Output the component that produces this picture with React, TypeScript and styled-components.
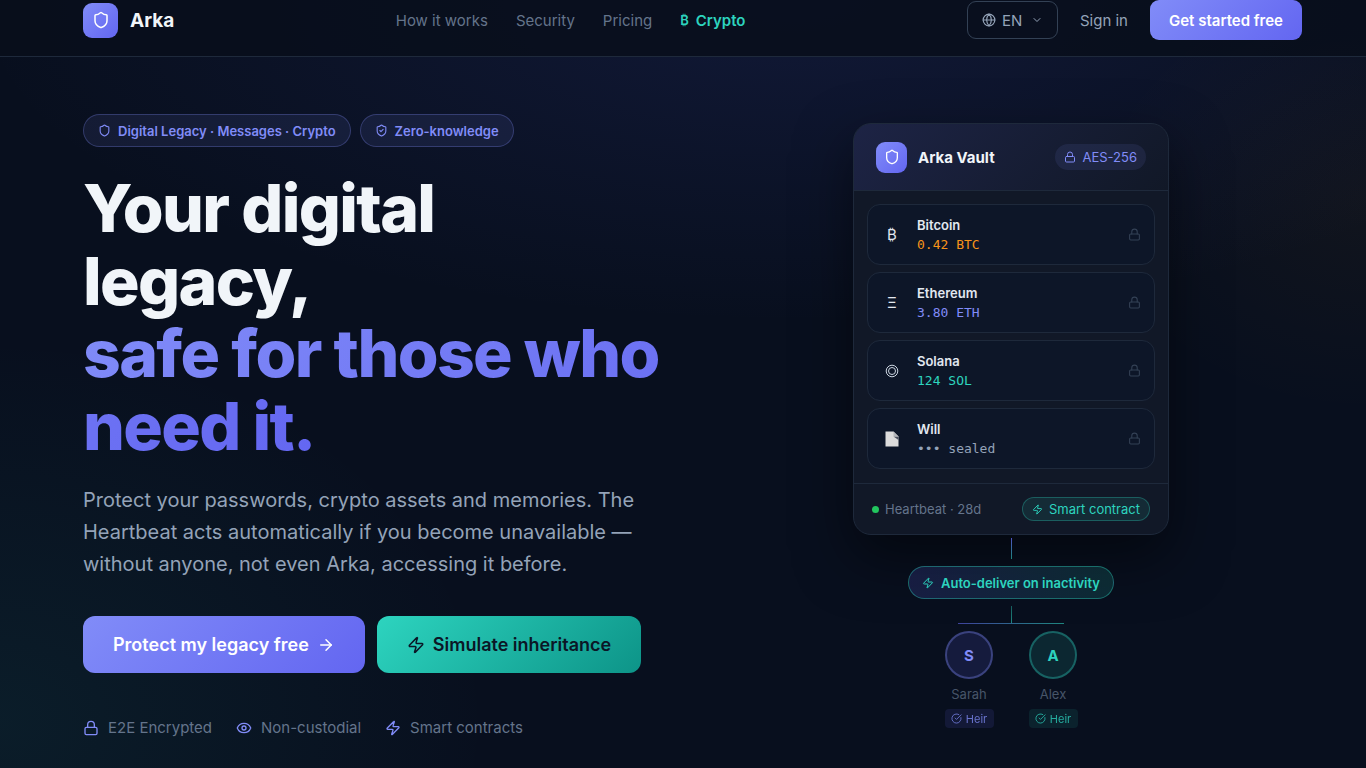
import React from "react";
import styled, { createGlobalStyle, css } from "styled-components";
import {
  ArrowRight,
  ChevronDown,
  CircleCheckBig,
  Eye,
  Globe,
  Lock,
  Shield,
  ShieldCheck,
  Zap,
} from "lucide-react";

type Tone = "indigo" | "teal";

const indigo = "#818cf8";
const indigoDeep = "#6366f1";
const teal = "#2dd4bf";
const line = "#1e293b";

const GlobalStyle = createGlobalStyle`
  *, *::before, *::after { box-sizing: border-box; }
  html { background: #080f1e; }
  body {
    margin: 0;
    color: #f1f5f9;
    font-family: Inter, "Liberation Sans", sans-serif;
    font-size: 15px;
    overflow-x: hidden;
  }
  h1, h2, h3, p, ul { margin: 0; padding: 0; }
  ul { list-style: none; }
  a { color: inherit; text-decoration: none; }
  button, select { font-family: inherit; cursor: pointer; }
  svg { flex: none; display: block; }
`;

const Page = styled.div`
  min-height: 100vh;
  display: flex;
  flex-direction: column;
  background:
    radial-gradient(ellipse 60% 42% at 58% 0%, rgba(79, 90, 220, 0.13), transparent 100%),
    radial-gradient(ellipse 36% 50% at 0% 94%, rgba(45, 212, 191, 0.07), transparent 100%),
    radial-gradient(ellipse 20% 28% at 100% 26%, rgba(245, 158, 11, 0.04), transparent 100%),
    #080f1e;
`;

const NavBar = styled.header`
  display: flex;
  justify-content: space-between;
  align-items: center;
  padding: 0 64px 16px 83px;
  background: rgba(8, 14, 27, 0.85);
  border-bottom: 1px solid ${line};
`;

const Brand = styled.a`
  display: flex;
  align-items: center;
  gap: 12px;
  font-size: 19px;
  font-weight: 700;
`;

const LogoTile = styled.span<{ $size: number }>`
  display: grid;
  place-items: center;
  width: ${(p) => p.$size}px;
  height: ${(p) => p.$size}px;
  border-radius: 9px;
  color: #fff;
  background: linear-gradient(135deg, ${indigo}, ${indigoDeep});
`;

const NavLinks = styled.nav`
  display: flex;
  align-items: center;
  gap: 28px;
`;

const NavLink = styled.a<{ $accent?: boolean }>`
  display: flex;
  align-items: center;
  gap: 7px;
  font-size: 15px;
  color: ${(p) => (p.$accent ? teal : "#64748b")};
  font-weight: ${(p) => (p.$accent ? 600 : 400)};
`;

const NavSymbol = styled.span`
  font-size: 13px;
`;

const NavActions = styled.div`
  display: flex;
  align-items: center;
  gap: 22px;
`;

const Language = styled.label`
  display: flex;
  align-items: center;
  width: 91px;
  height: 38px;
  padding: 0 14px;
  border: 1px solid #334155;
  border-radius: 9px;
  color: #94a3b8;
`;

const LanguageSelect = styled.select`
  appearance: none;
  flex: 1;
  min-width: 0;
  padding: 0 0 0 6px;
  border: 0;
  background: transparent;
  color: inherit;
  font-size: 15px;
`;

const SignIn = styled.a`
  font-size: 15px;
  color: #94a3b8;
`;

const StartButton = styled.button`
  height: 40px;
  padding: 0 19px;
  border: 0;
  border-radius: 9px;
  color: #fff;
  font-size: 15px;
  font-weight: 600;
  background: linear-gradient(135deg, ${indigo}, ${indigoDeep});
`;

const Hero = styled.main`
  display: grid;
  grid-template-columns: minmax(0, 1fr) minmax(0, 1fr);
  gap: 55px;
  align-items: start;
  padding: 57px 64px 28px 83px;
`;

const Pitch = styled.section`
  display: flex;
  flex-direction: column;
`;

const Row = styled.div<{ $gap: number }>`
  display: flex;
  flex-wrap: wrap;
  align-items: center;
  gap: ${(p) => p.$gap}px;
`;

const Tag = styled.span`
  display: flex;
  align-items: center;
  gap: 7px;
  height: 33px;
  padding: 0 14px;
  border: 1px solid rgba(129, 140, 248, 0.28);
  border-radius: 17px;
  background: rgba(129, 140, 248, 0.1);
  color: ${indigo};
  font-size: 13px;
  font-weight: 600;
`;

const Headline = styled.h1`
  margin-top: 25px;
  font-size: 66px;
  line-height: 1.1;
  font-weight: 800;
  letter-spacing: -0.025em;
`;

const HeadlineAccent = styled.span`
  color: transparent;
  background: linear-gradient(135deg, ${indigo}, ${indigoDeep});
  background-clip: text;
  -webkit-background-clip: text;
`;

const HeadlineStart = styled.span`
  display: block;
  max-width: 420px;
`;

const Lead = styled.p`
  max-width: 560px;
  margin-top: 22px;
  color: #94a3b8;
  font-size: 20px;
  line-height: 32px;
`;

const CallToActions = styled(Row)`
  margin-top: 36px;
`;

const CallToAction = styled.button<{ $tone: Tone }>`
  display: flex;
  align-items: center;
  gap: 8px;
  height: 57px;
  padding: 0 30px;
  border: 0;
  border-radius: 12px;
  font-size: 18px;
  font-weight: 600;
  ${(p) =>
    p.$tone === "indigo"
      ? css`
          color: #fff;
          background: linear-gradient(135deg, ${indigo}, ${indigoDeep});
        `
      : css`
          color: #0b1626;
          background: linear-gradient(135deg, ${teal}, #0d9488);
        `}
`;

const TrustList = styled.ul`
  display: flex;
  gap: 24px;
  margin-top: 45px;
`;

const TrustItem = styled.li`
  display: flex;
  align-items: center;
  gap: 9px;
  color: #64748b;
  font-size: 15px;
  line-height: 20px;

  svg { color: ${indigo}; }
`;

const Diagram = styled.section`
  display: flex;
  flex-direction: column;
  align-items: center;
  padding-top: 9px;
`;

const Card = styled.article`
  width: 316px;
  border: 1px solid ${line};
  border-radius: 18px;
  background: #111827;
  box-shadow: 0 22px 56px rgba(0, 0, 0, 0.5);
  overflow: hidden;
`;

const CardHeader = styled.header`
  display: flex;
  align-items: center;
  gap: 11px;
  height: 67px;
  padding: 0 22px;
  border-bottom: 1px solid ${line};
  background: linear-gradient(135deg, rgba(99, 102, 241, 0.15), transparent);
`;

const CardTitle = styled.h2`
  flex: 1;
  font-size: 15px;
  font-weight: 700;
`;

const CipherBadge = styled.span`
  display: flex;
  align-items: center;
  gap: 6px;
  height: 26px;
  padding: 0 9px;
  border-radius: 13px;
  background: rgba(129, 140, 248, 0.1);
  color: ${indigo};
  font-size: 13px;
`;

const AssetList = styled.ul`
  display: flex;
  flex-direction: column;
  gap: 7px;
  padding: 13px 13px 14px;
`;

const AssetItem = styled.li`
  display: flex;
  align-items: center;
  height: 61px;
  padding: 0 13px;
  border: 1px solid ${line};
  border-radius: 13px;
  background: #0d1628;
  color: #334155;
`;

const AssetSymbol = styled.span`
  display: grid;
  place-items: center;
  width: 22px;
  margin-right: 14px;
  color: #e2e8f0;
  font-family: Inter, "DejaVu Sans", sans-serif;
  font-size: 15px;
`;

const AssetText = styled.div`
  flex: 1;
`;

const AssetName = styled.h3`
  color: #e2e8f0;
  font-size: 13px;
  line-height: 20px;
  font-weight: 600;
`;

const AssetAmount = styled.p<{ $color: string }>`
  color: ${(p) => p.$color};
  font-family: "DejaVu Sans Mono", monospace;
  font-size: 13px;
  line-height: 20px;
`;

const CardFooter = styled.footer`
  display: flex;
  justify-content: space-between;
  align-items: center;
  height: 51px;
  padding: 0 18px;
  border-top: 1px solid ${line};
`;

const Heartbeat = styled.span`
  display: flex;
  align-items: center;
  gap: 6px;
  color: #64748b;
  font-size: 13px;

  &::before {
    content: "";
    width: 7px;
    height: 7px;
    border-radius: 50%;
    background: #22c55e;
  }
`;

const ContractBadge = styled.span`
  display: flex;
  align-items: center;
  gap: 6px;
  height: 24px;
  padding: 0 9px;
  border: 1px solid rgba(45, 212, 191, 0.3);
  border-radius: 12px;
  background: rgba(45, 212, 191, 0.1);
  color: ${teal};
  font-size: 13px;
`;

const Stem = styled.span<{ $height: number; $from: string }>`
  width: 1px;
  height: ${(p) => p.$height}px;
  background: linear-gradient(${(p) => p.$from}, rgba(45, 212, 191, 0.6));
`;

const CardStem = styled(Stem)`
  margin-top: 3px;
`;

const DeliverPill = styled.div`
  display: flex;
  align-items: center;
  gap: 7px;
  height: 33px;
  margin: 7px 0;
  padding: 0 13px;
  border: 1px solid rgba(45, 212, 191, 0.4);
  border-radius: 17px;
  background: linear-gradient(90deg, rgba(99, 102, 241, 0.18), rgba(45, 212, 191, 0.15));
  color: ${teal};
  font-size: 13px;
  font-weight: 600;
`;

const Branch = styled.span`
  width: 106px;
  height: 1px;
  background: linear-gradient(90deg, rgba(99, 102, 241, 0.6), rgba(45, 212, 191, 0.6));
`;

const Heirs = styled.ul`
  display: flex;
  gap: 35px;
  margin-top: 7px;
`;

const HeirItem = styled.li`
  display: flex;
  flex-direction: column;
  align-items: center;
  width: 49px;
`;

const toneColors = {
  indigo: { text: indigo, edge: "rgba(129, 140, 248, 0.35)", fill: "rgba(99, 102, 241, 0.15)" },
  teal: { text: teal, edge: "rgba(45, 212, 191, 0.35)", fill: "rgba(45, 212, 191, 0.12)" },
};

const Avatar = styled.span<{ $tone: Tone }>`
  display: grid;
  place-items: center;
  width: 48px;
  height: 48px;
  border: 2px solid ${(p) => toneColors[p.$tone].edge};
  border-radius: 50%;
  background: ${(p) => toneColors[p.$tone].fill};
  color: ${(p) => toneColors[p.$tone].text};
  font-size: 15px;
  font-weight: 700;
`;

const HeirName = styled.span`
  margin-top: 5px;
  color: #475569;
  font-size: 13px;
  line-height: 20px;
`;

const HeirBadge = styled.span<{ $tone: Tone }>`
  display: flex;
  align-items: center;
  justify-content: center;
  gap: 4px;
  width: 49px;
  height: 19px;
  margin-top: 5px;
  border-radius: 4px;
  background: ${(p) => toneColors[p.$tone].fill};
  color: ${(p) => toneColors[p.$tone].text};
  font-size: 11px;
  opacity: 0.8;
`;

const DocumentGlyph = () => (
  <svg width="14" height="16" viewBox="0 0 14 16" aria-hidden="true">
    <path d="M0.5 0.5h8l5 5v10h-13z" fill="#dcdcdc" />
    <path d="M8.5 5.5h5v3.5z" fill="#4b5160" />
    <path d="M8.5 0.5l5 5h-5z" fill="#b4b6ba" />
  </svg>
);

const RingsGlyph = () => (
  <svg width="14" height="14" viewBox="0 0 14 14" fill="none" stroke="#cbd5e1" aria-hidden="true">
    <circle cx="7" cy="7" r="5.8" />
    <circle cx="7" cy="7" r="3.5" />
  </svg>
);

const assets = [
  { name: "Bitcoin", amount: "0.42 BTC", symbol: "₿", color: "#f7931a" },
  { name: "Ethereum", amount: "3.80 ETH", symbol: "Ξ", color: indigo },
  { name: "Solana", amount: "124 SOL", symbol: <RingsGlyph />, color: teal },
  { name: "Will", amount: "••• sealed", symbol: <DocumentGlyph />, color: "#94a3b8" },
];

const heirs: { name: string; tone: Tone }[] = [
  { name: "Sarah", tone: "indigo" },
  { name: "Alex", tone: "teal" },
];

export default function App() {
  return (
    <>
      <GlobalStyle />
      <Page>
        <NavBar>
          <Brand href="#">
            <LogoTile $size={35}>
              <Shield size={18} />
            </LogoTile>
            Arka
          </Brand>
          <NavLinks>
            <NavLink href="#how">How it works</NavLink>
            <NavLink href="#security">Security</NavLink>
            <NavLink href="#pricing">Pricing</NavLink>
            <NavLink href="#crypto" $accent>
              <NavSymbol>₿</NavSymbol>Crypto
            </NavLink>
          </NavLinks>
          <NavActions>
            <Language>
              <Globe size={14} />
              <LanguageSelect aria-label="Language" defaultValue="EN">
                <option>EN</option>
              </LanguageSelect>
              <ChevronDown size={12} />
            </Language>
            <SignIn href="#signin">Sign in</SignIn>
            <StartButton>Get started free</StartButton>
          </NavActions>
        </NavBar>
        <Hero>
          <Pitch>
            <Row $gap={9}>
              <Tag>
                <Shield size={13} />
                Digital Legacy · Messages · Crypto
              </Tag>
              <Tag>
                <ShieldCheck size={13} />
                Zero-knowledge
              </Tag>
            </Row>
            <Headline>
              <HeadlineStart>Your digital legacy,</HeadlineStart>
              <HeadlineAccent>safe for those who need it.</HeadlineAccent>
            </Headline>
            <Lead>
              Protect your passwords, crypto assets and memories. The Heartbeat acts automatically
              if you become unavailable — without anyone, not even Arka, accessing it before.
            </Lead>
            <CallToActions $gap={12}>
              <CallToAction $tone="indigo">
                Protect my legacy free
                <ArrowRight size={18} />
              </CallToAction>
              <CallToAction $tone="teal">
                <Zap size={18} />
                Simulate inheritance
              </CallToAction>
            </CallToActions>
            <TrustList>
              <TrustItem>
                <Lock size={16} />
                E2E Encrypted
              </TrustItem>
              <TrustItem>
                <Eye size={16} />
                Non-custodial
              </TrustItem>
              <TrustItem>
                <Zap size={16} />
                Smart contracts
              </TrustItem>
            </TrustList>
          </Pitch>
          <Diagram>
            <Card>
              <CardHeader>
                <LogoTile $size={31}>
                  <Shield size={16} />
                </LogoTile>
                <CardTitle>Arka Vault</CardTitle>
                <CipherBadge>
                  <Lock size={12} />
                  AES-256
                </CipherBadge>
              </CardHeader>
              <AssetList>
                {assets.map((asset) => (
                  <AssetItem key={asset.name}>
                    <AssetSymbol>{asset.symbol}</AssetSymbol>
                    <AssetText>
                      <AssetName>{asset.name}</AssetName>
                      <AssetAmount $color={asset.color}>{asset.amount}</AssetAmount>
                    </AssetText>
                    <Lock size={13} />
                  </AssetItem>
                ))}
              </AssetList>
              <CardFooter>
                <Heartbeat>Heartbeat · 28d</Heartbeat>
                <ContractBadge>
                  <Zap size={11} />
                  Smart contract
                </ContractBadge>
              </CardFooter>
            </Card>
            <CardStem $height={21} $from="rgba(99, 102, 241, 0.8)" />
            <DeliverPill>
              <Zap size={12} />
              Auto-deliver on inactivity
            </DeliverPill>
            <Stem $height={17} $from="rgba(45, 212, 191, 0.4)" />
            <Branch />
            <Heirs>
              {heirs.map((heir) => (
                <HeirItem key={heir.name}>
                  <Avatar $tone={heir.tone}>{heir.name[0]}</Avatar>
                  <HeirName>{heir.name}</HeirName>
                  <HeirBadge $tone={heir.tone}>
                    <CircleCheckBig size={11} />
                    Heir
                  </HeirBadge>
                </HeirItem>
              ))}
            </Heirs>
          </Diagram>
        </Hero>
      </Page>
    </>
  );
}
